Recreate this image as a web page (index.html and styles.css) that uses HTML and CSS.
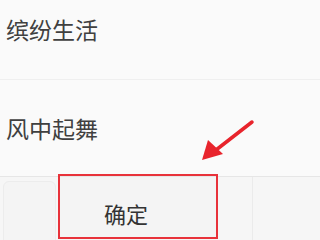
FILE: index.html
```html
<!DOCTYPE html>
<html lang="zh-CN">
<head>
    <meta charset="UTF-8">
    <meta name="viewport" content="width=device-width, initial-scale=1.0">
    <title>选择</title>
    <link rel="stylesheet" href="styles.css">
</head>
<body>
    <div class="list">
        <div class="row first">缤纷生活</div>
        <div class="row">风中起舞</div>
    </div>

    <div class="buttons">
        <div class="btn btn-side"></div>
        <div class="btn btn-ok">
            确定
            <div class="mark"></div>
        </div>
        <div class="btn btn-gap"></div>
        <div class="btn btn-rest"></div>
    </div>

    <!-- red pointer arrow -->
    <svg class="arrow" width="60" height="50" viewBox="0 0 60 50">
        <line x1="53" y1="8" x2="17" y2="36" stroke="#e8242c" stroke-width="3.5" stroke-linecap="round"/>
        <polygon points="3,46 9,26 24,40" fill="#e8242c"/>
    </svg>
</body>
</html>
```

FILE: styles.css
```css
* {
    margin: 0;
    padding: 0;
    box-sizing: border-box;
}

body {
    font-family: "Noto Sans CJK SC", "Noto Sans", sans-serif;
    background: #fafafa;
    width: 320px;
    height: 240px;
    overflow: hidden;
    position: relative;
}

.list {
    margin-top: -21px;
}

.row {
    height: 97px;
    display: flex;
    align-items: center;
    padding-left: 6px;
    font-size: 23px;
    color: #404040;
    border-bottom: 1px solid #efefef;
}

.row.first {
    height: 101px;
}

.row:last-child {
    border-bottom: 1px solid #e6e6e6;
}

.buttons {
    display: flex;
    height: 64px;
    background: #f6f6f6;
}

.btn {
    height: 100%;
}

.btn-side {
    width: 53px;
    margin: 4px 4px 0 3px;
    background: #f4f4f4;
    border: 1px solid #ececec;
    border-radius: 6px 6px 0 0;
}

.btn-ok {
    position: relative;
    width: 156px;
    display: flex;
    align-items: center;
    justify-content: center;
    font-size: 22px;
    color: #333;
    padding: 8px 24px 0 0;
    background: #f4f4f4;
}

.btn-gap {
    width: 37px;
    border-right: 1px solid #ebebeb;
}

.btn-rest {
    flex: 1;
}

.mark {
    position: absolute;
    left: -2px;
    right: -2px;
    top: -3px;
    bottom: 2px;
    border: 2px solid #e8323a;
}

.arrow {
    position: absolute;
    left: 199px;
    top: 114px;
}
```
